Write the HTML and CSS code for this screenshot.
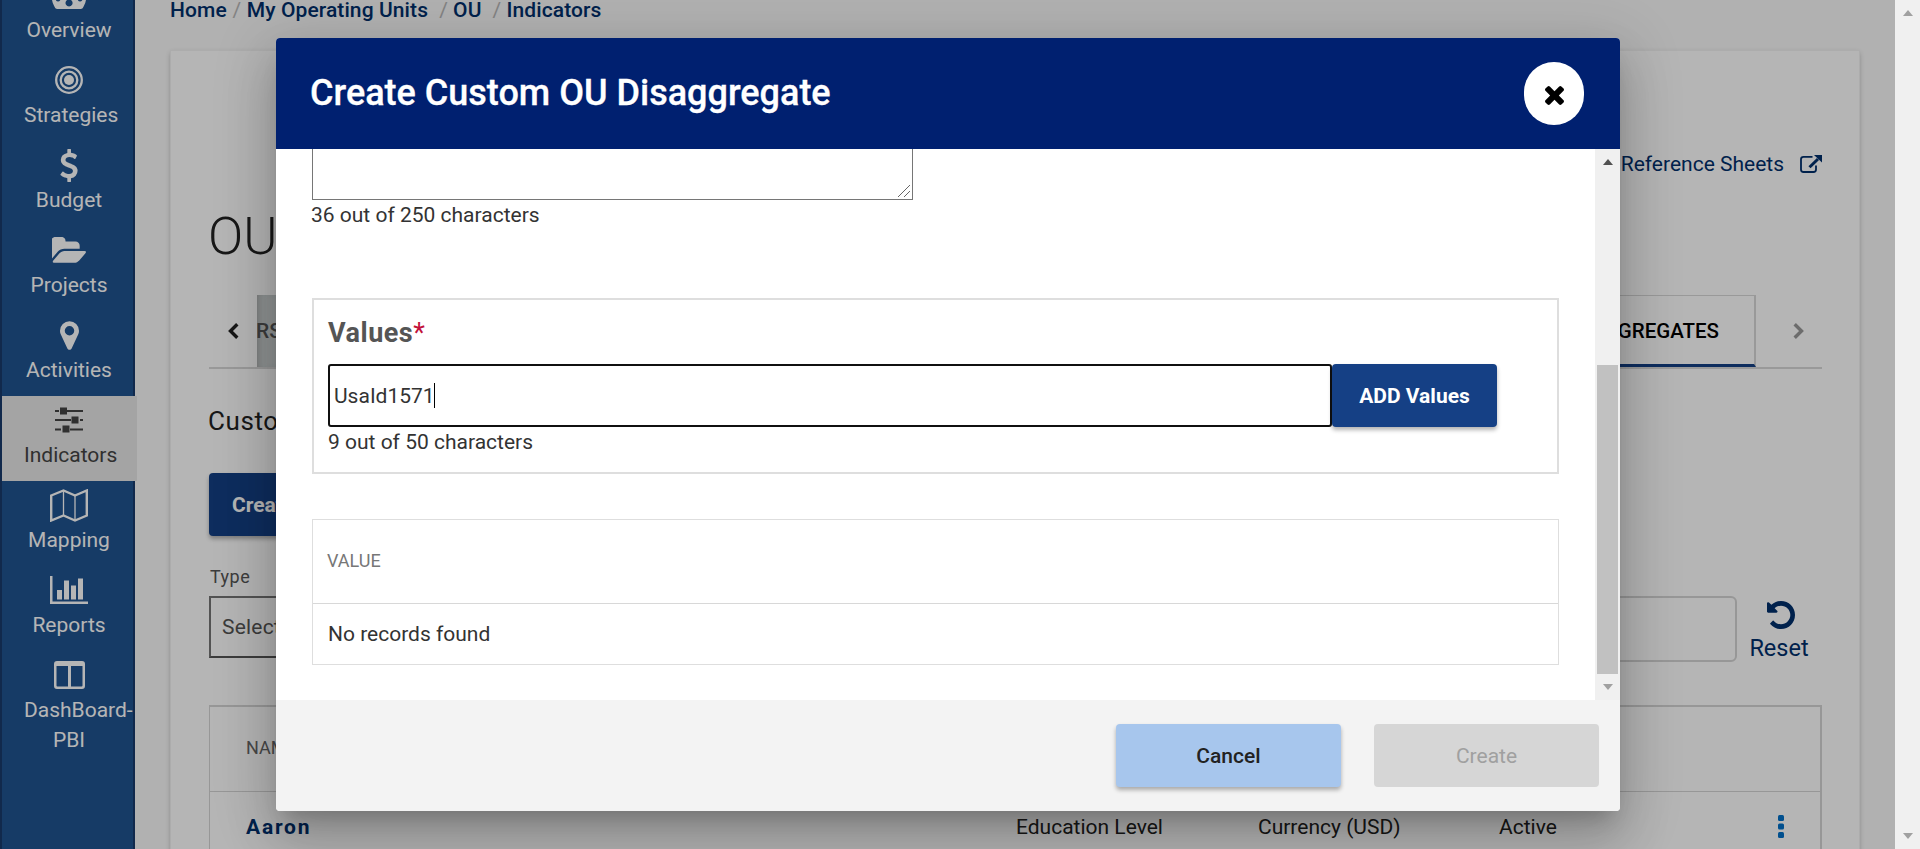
FILE: index.html
```html
<!DOCTYPE html>
<html lang="en">
<head>
<meta charset="utf-8">
<title>Create Custom OU Disaggregate</title>
<link rel="stylesheet" href="styles.css">
</head>
<body>
<div class="app">
  <nav class="sidebar">
    <div class="nav-list">
      <a class="nav-item"><span class="nav-icon"><svg width="34" height="28" viewBox="0 0 34 28"><path fill-rule="evenodd" d="M17 0a17 17 0 0 1 14.600 25.600Q31 28 29 28H5Q3 28 2.400 25.600A17 17 0 0 1 17 0zM17 18.500a3.500 3.500 0 1 0 .1 0zM6 16a2.300 2.300 0 1 0 .1 0zM28 16a2.300 2.300 0 1 0 .1 0z"/></svg></span><span class="nav-label">Overview</span></a>
      <a class="nav-item"><span class="nav-icon"><svg width="28" height="28" viewBox="0 0 28 28"><circle class="ring" cx="14" cy="14" r="12.800"/><circle class="ring" cx="14" cy="14" r="8.300"/><circle cx="14" cy="14" r="5"/></svg></span><span class="nav-label">Strategies</span></a>
      <a class="nav-item"><span class="nav-icon"><svg width="18" height="33" viewBox="424 0 944 1792"><path d="M1362 1185q0 153-99.500 263.500t-258.500 136.500v175q0 14-9 23t-23 9h-135q-13 0-22.500-9.500t-9.500-22.500v-175q-66-9-127.500-31t-101.500-44.500-74-48-46.500-37.500-17.500-18q-17-21-2-41l103-135q7-10 23-12 15-2 24 9l2 2q113 99 243 125 37 8 74 8 81 0 142.500-43t61.500-122q0-28-15-53t-33.500-42-58.500-37.500-66-32-80-32.500q-39-16-61.500-25t-61.500-26.500-62.500-31-56.500-35.500-53.500-42.500-43.500-49-35.500-58-21-66.500-8.500-78q0-138 98-242t255-134v-180q0-13 9.500-22.500t22.500-9.500h135q14 0 23 9t9 23v176q57 6 110.500 23t87 33.500 63.500 37.500 39 29 15 14q17 18 5 38l-81 146q-8 15-23 16-14 3-27-7-3-3-14.500-12t-39-26.500-58.500-32-74.500-26-85.500-11.500q-95 0-155 43t-60 111q0 26 8.500 48t29.500 41.500 39.500 33 56 31 60.500 27 70 27.500q53 20 81 31.500t76 35 75.500 42.500 62 50 53 63.500 31.500 76.500 13 94z"/></svg></span><span class="nav-label">Budget</span></a>
      <a class="nav-item"><span class="nav-icon"><svg width="34" height="26" viewBox="0 124 1845 1391"><path d="M1845 931q0 31-31 66l-336 396q-43 51-120.500 86.500t-143.500 35.500h-1088q-34 0-60.500-13t-26.500-43q0-31 31-66l336-396q43-51 120.500-86.500t143.500-35.500h1088q34 0 60.500 13t26.500 43zm-343-344v160h-832q-94 0-197 47.500t-164 119.500l-337 396-5 6q0-4-.5-12.500t-.5-12.500v-960q0-92 66-158t158-66h320q92 0 158 66t66 158v32h544q92 0 158 66t66 158z"/></svg></span><span class="nav-label">Projects</span></a>
      <a class="nav-item"><span class="nav-icon"><svg width="19" height="29" viewBox="384 128 1024 1536"><path d="M1152 640q0-106-75-181t-181-75-181 75-75 181 75 181 181 75 181-75 75-181zm256 0q0 109-33 179l-364 774q-16 33-47.500 52t-67.500 19-67.500-19-46.500-52l-365-774q-33-70-33-179 0-212 150-362t362-150 362 150 150 362z"/></svg></span><span class="nav-label">Activities</span></a>
      <a class="nav-item active"><span class="nav-icon"><svg width="28" height="26" viewBox="0 0 28 26"><path d="M0 3h4v2H0zM12 3h16v2H12zM5 .5h7v7H5zM0 12h16v2H0zM25 12h3v2h-3zM16.500 9.500h7v7h-7zM0 21.500h6v2H0zM15 21.500h13v2H15zM7.500 18.500h7v7h-7z"/></svg></span><span class="nav-label">Indicators</span></a>
      <a class="nav-item"><span class="nav-icon"><svg width="38" height="33" viewBox="0 0 38 33"><path class="line" d="M1.200 6.500L13.500 1.500L25 6.500L36.800 1.500V26.500L25 31.500L13.500 26.500L1.200 31.500z"/><path class="fine" d="M13.500 1.500V26.500M25 6.500V31.500"/></svg></span><span class="nav-label">Mapping</span></a>
      <a class="nav-item"><span class="nav-icon"><svg width="38" height="28" viewBox="0 0 38 28"><path d="M0 0h2.500v25.500H38V28H0zM7 14h5v9.500H7zM14 4.500h5v19h-5zM21 9.500h5v14h-5zM28 2.500h5v21h-5z"/></svg></span><span class="nav-label">Reports</span></a>
      <a class="nav-item"><span class="nav-icon"><svg width="31" height="28" viewBox="0 0 31 28"><path fill-rule="evenodd" d="M3 0h25q3 0 3 3v22q0 3-3 3H3q-3 0-3-3V3q0-3 3-3zM2.500 5v19.500q0 1 1 1H14V5zM17 5v20.500h10.500q1 0 1-1V5z"/></svg></span><span class="nav-label">DashBoard-PBI</span></a>
    </div>
  </nav>

  <main class="main">
    <div class="breadcrumb">
      <a>Home</a><i>/</i><a>My Operating Units</a><i class="wide">/</i><a>OU</a><i class="wide">/</i><a>Indicators</a>
    </div>
    <section class="card">
      <div class="ref-row"><a>Reference Sheets</a><svg width="22" height="18" viewBox="0 0 22 18"><path class="box" d="M12.500 1.800H3.500Q1 1.800 1 4.300V14.500Q1 17 3.500 17H13.500Q16 17 16 14.500V10.500"/><path class="arrow" d="M9.500 12.300L18 4"/><path class="head" d="M14 0H22V7.500z"/></svg></div>
      <h1>OU</h1>
      <div class="tabs">
        <svg class="chev" width="11" height="16" viewBox="0 0 11 16"><path d="M9.300 1.200L2.500 8L9.300 14.800"/></svg>
        <div class="tab off">RS</div>
        <div class="tab on">DISAGGREGATES</div>
        <svg class="chev next" width="11" height="16" viewBox="0 0 11 16"><path d="M1.700 1.200L8.500 8L1.700 14.800"/></svg>
      </div>
      <h2>Custom</h2>
      <button class="btn primary create-btn">Create</button>
      <div class="filters">
        <div class="field"><label>Type</label><div class="select">Select</div></div>
        <div class="search"></div>
        <div class="reset"><svg width="28" height="28" viewBox="128 128 1536 1536"><path d="M1664 896q0 156-61 298t-164 245-245 164-298 61q-172 0-327-72.500t-264-204.500q-7-10-6.500-22.500t8.500-20.500l137-138q10-9 25-9 16 2 23 12 73 95 179 147t225 52q104 0 198.500-40.500t163.500-109.500 109.500-163.500 40.500-198.500-40.500-198.500-109.500-163.500-163.500-109.500-198.500-40.500q-98 0-188 35.500t-160 101.500l137 138q31 30 14 69-17 40-59 40h-448q-26 0-45-19t-19-45v-448q0-42 40-59 39-17 69 14l130 129q107-101 244.500-156.500t284.500-55.500q156 0 298 61t245 164 164 245 61 298z"/></svg><span>Reset</span></div>
      </div>
      <div class="grid">
        <div class="grid-head">NAME</div>
        <div class="grid-row"><b>Aaron</b><span>Education Level</span><span>Currency (USD)</span><span>Active</span><svg width="6" height="23" viewBox="0 0 6 23"><rect width="6" height="6" rx="1.500"/><rect y="8.500" width="6" height="6" rx="1.500"/><rect y="17" width="6" height="6" rx="1.500"/></svg></div>
      </div>
    </section>
  </main>
  <div class="backdrop"></div>
</div>

<div class="scrollbar page-scroll"><i class="up"></i><i class="down"></i></div>

<div class="modal">
  <header class="modal-head">
    <span>Create Custom OU Disaggregate</span>
    <button class="close"><svg width="19" height="19" viewBox="302 366 1188 1188"><path d="M1490 1322q0 40-28 68l-136 136q-28 28-68 28t-68-28l-294-294-294 294q-28 28-68 28t-68-28l-136-136q-28-28-28-68t28-68l294-294-294-294q-28-28-28-68t28-68l136-136q28-28 68-28t68 28l294 294 294-294q28-28 68-28t68 28l136 136q28 28 28 68t-28 68l-294 294 294 294q28 28 28 68z"/></svg></button>
  </header>
  <div class="modal-mid">
    <div class="modal-body">
      <div class="textarea"><svg width="12" height="12" viewBox="0 0 12 12"><path d="M0 12L12 0M6 12L12 6"/></svg></div>
      <div class="count first">36 out of 250 characters</div>
      <div class="values">
        <div class="values-label">Values<em>*</em></div>
        <div class="values-row"><div class="input"><span>UsaId1571</span><i class="caret"></i></div><button class="btn primary add-btn">ADD Values</button></div>
        <div class="count">9 out of 50 characters</div>
      </div>
      <div class="vtable">
        <div class="vhead">VALUE</div>
        <div class="vrow">No records found</div>
      </div>
    </div>
    <div class="scrollbar"><i class="up dark"></i><div class="thumb"></div><i class="down"></i></div>
  </div>
  <footer class="modal-foot"><button class="btn cancel">Cancel</button><button class="btn disabled">Create</button></footer>
</div>
</body>
</html>
```
FILE: styles.css
```css
* { box-sizing: border-box; }
html, body { margin: 0; height: 100%; overflow: hidden; }
body { display: flex; font: 400 21px/30px Roboto, sans-serif; color: #222; height: 849px; position: relative; }
i, em { font-style: normal; }
svg { display: block; flex: none; }
button { font: inherit; border: 0; padding: 0; margin: 0; }

.app { position: relative; flex: 1; display: flex; background: #f9f9f9; height: 849px; overflow: hidden; }
.backdrop { position: absolute; inset: 0; background: rgba(0, 0, 0, .29); }

/* sidebar */
.sidebar { width: 135px; flex: none; background: #205390; border: solid #183b6b; border-width: 0 2px; }
.nav-list { margin-top: -29px; }
.nav-item { display: block; min-height: 85px; padding-top: 9px; color: #fff; fill: #fff; stroke: #fff; }
.nav-icon { display: flex; width: 134px; height: 30px; align-items: center; justify-content: center; stroke: none; margin-bottom: 5px; }
.nav-label { display: block; width: 90px; margin-left: 22px; text-align: center; }
.nav-item.active { width: 135px; background: #e7e7e7; color: #444; fill: #444; }
.ring { fill: none; stroke: #fff; stroke-width: 2.300; }
.line { fill: none; stroke: #fff; stroke-width: 2.400; }
.fine { fill: none; stroke: #fff; stroke-width: 1.300; }

/* page */
.main { flex: 1; padding: 0 36px; }
.breadcrumb { display: flex; height: 51px; line-height: 20px; font-weight: 500; color: #002f6c; margin-left: -1px; letter-spacing: .1px; }
.breadcrumb i { width: 20px; text-align: center; font-weight: 400; color: #b8b8b8; }
.breadcrumb i.wide { width: 25px; padding-left: 6px; }
.card { width: 1688px; height: 900px; padding: 98px 37px 0 38px; background: #fff; box-shadow: 0 0 0 1px #f2f2f2, 0 2px 5px rgba(0, 0, 0, .3); }
.ref-row { display: flex; justify-content: flex-end; align-items: center; gap: 16px; color: #002f6c; }
.ref-row .box { fill: none; stroke: #002f6c; stroke-width: 1.800; }
.ref-row .arrow { fill: none; stroke: #002f6c; stroke-width: 3; }
.ref-row .head { fill: #002f6c; }
h1 { margin: 28px 0 28px -1px; font-weight: 300; font-size: 52px; line-height: 60px; }
.tabs { display: flex; height: 74px; border-bottom: 2px solid #d8d8d8; align-items: flex-start; font-size: 21px; }
.tab { height: 72px; line-height: 72px; font-weight: 500; overflow: hidden; white-space: nowrap; }
.tab.off { width: 60px; background: #ccd2d2; color: #555; text-indent: -1px; box-shadow: inset 6px 0 8px -6px #999; }
.tab.on { margin-left: auto; width: 300px; padding-right: 35px; text-align: right; color: #000; font-size: 20.500px; border: solid #d8d8d8; border-width: 1px 2px 0 0; border-bottom: 3px solid #154085; line-height: 71px; }
.chev { margin: 28px 18px 0 19px; fill: none; stroke: #222; stroke-width: 3.400; }
.chev.next { margin: 28px 18px 0 37px; stroke: #999; }
h2 { margin: 34px 0 34px -1px; font-weight: 400; font-size: 26px; line-height: 36px; letter-spacing: .6px; }
.btn { display: block; height: 63px; border-radius: 4px; font-weight: 500; }
.primary { background: #154085; color: #fff; font-weight: 700; box-shadow: 0 3px 4px rgba(0, 0, 0, .3); }
.create-btn { width: 200px; padding-left: 23px; text-align: left; }
.filters { display: flex; height: 97px; margin-top: 29px; }
.field { width: 300px; color: #555; }
.field label { display: block; padding-left: 1px; font-size: 18px; line-height: 24px; letter-spacing: .5px; }
.select { margin-top: 7px; height: 62px; padding-left: 11px; line-height: 58px; border: 2px solid #757575; border-bottom-color: #555; color: #555; letter-spacing: .2px; }
.search { width: 400px; height: 66px; margin: 31px 12px 0 auto; border: 2px solid #d5d5d5; border-radius: 6px; }
.reset { width: 73px; padding-top: 36px; display: flex; flex-direction: column; align-items: center; color: #002f6c; fill: #002f6c; font-size: 23.500px; padding-right: 13px; }
.reset svg { margin-left: 3px; }
.reset span { margin-top: 4px; }
.grid { margin-top: 43px; border: 2px solid #d5d5d5; border-width: 2px 2px 0 1px; height: 300px; }
.grid-head { height: 85px; padding: 27px 0 0 36px; font-size: 18px; color: #666; border-bottom: 1px solid #d5d5d5; line-height: 28px; }
.grid-row { display: grid; grid-template-columns: 770px 242px 241px 279px 6px; align-items: center; padding-left: 36px; height: 69px; fill: #0070c8; }
.grid-row b { color: #002f6c; letter-spacing: 1.800px; }

/* scrollbars */
.scrollbar { width: 25px; flex: none; background: #f0f0f0; display: flex; flex-direction: column; align-items: center; }
.scrollbar i { border: solid transparent; border-width: 0 5.500px; }
.scrollbar .up { border-bottom: 6px solid #a0a0a0; margin-top: 10px; }
.scrollbar .up.dark { border-bottom-color: #505050; }
.scrollbar .down { border-top: 6px solid #a0a0a0; margin: auto 0 10px; }
.thumb { width: 21px; height: 309px; margin-top: 200px; background: #c1c1c1; }

/* dialog */
.modal { position: absolute; left: 276px; top: 38px; width: 1344px; height: 773px; display: flex; flex-direction: column; border-radius: 4px; background: #fff; box-shadow: 0 14px 20px -9px rgba(0, 0, 0, .2), 0 31px 50px 4px rgba(0, 0, 0, .14), 0 12px 60px 10px rgba(0, 0, 0, .12); }
.modal-head { height: 111px; flex: none; display: flex; justify-content: space-between; align-items: flex-start; padding: 24px 36px 0 34px; background: #002070; color: #fff; border-radius: 4px 4px 0 0; font-weight: 500; font-size: 36px; line-height: 62px; -webkit-text-stroke: .3px #fff; }
.close { width: 60px; height: 63px; border-radius: 30px; background: #fff; display: flex; align-items: center; justify-content: center; padding-top: 3px; }
.modal-mid { flex: 1; display: flex; }
.modal-body { flex: 1; padding: 0 36px; }
.textarea { width: 601px; height: 51px; border: 1px solid #767676; border-top: 0; display: flex; justify-content: flex-end; align-items: flex-end; }
.textarea svg { fill: none; stroke: #666; stroke-width: 1; margin: 0 2px 2px 0; }
.count { line-height: 30px; color: #333; }
.count.first { margin-left: -1px; }
.values { margin-top: 68px; height: 176px; border: 2px solid #dedede; padding: 16px 14px 0; }
.values-label { font-weight: 700; font-size: 27px; line-height: 34px; color: #555; letter-spacing: .5px; height: 48px; }
.values-label em { font-weight: 400; color: #c2113a; }
.values-row { display: flex; }
.input { width: 1004px; height: 63px; border: 2px solid #101010; border-radius: 3px; display: flex; align-items: center; padding-left: 4px; color: #333; }
.caret { width: 1px; height: 25px; background: #000; margin-left: -1px; }
.add-btn { width: 165px; }
.vtable { margin-top: 45px; height: 146px; border: 1px solid #dedede; }
.vhead { height: 84px; padding-left: 14px; line-height: 81px; font-size: 18px; color: #777; border-bottom: 1px solid #d8d8d8; }
.vrow { padding-left: 15px; line-height: 60px; color: #333; }
.modal-foot { height: 111px; flex: none; display: flex; justify-content: flex-end; gap: 33px; padding: 24px 21px 0; background: #f3f3f3; border-radius: 0 0 4px 4px; }
.modal-foot .btn { width: 225px; }
.cancel { background: #a7c6ed; color: #222; box-shadow: 0 3px 4px rgba(0, 0, 0, .3); }
.disabled { background: #d6d6d6; color: #a0a0a0; font-weight: 400; }
```
